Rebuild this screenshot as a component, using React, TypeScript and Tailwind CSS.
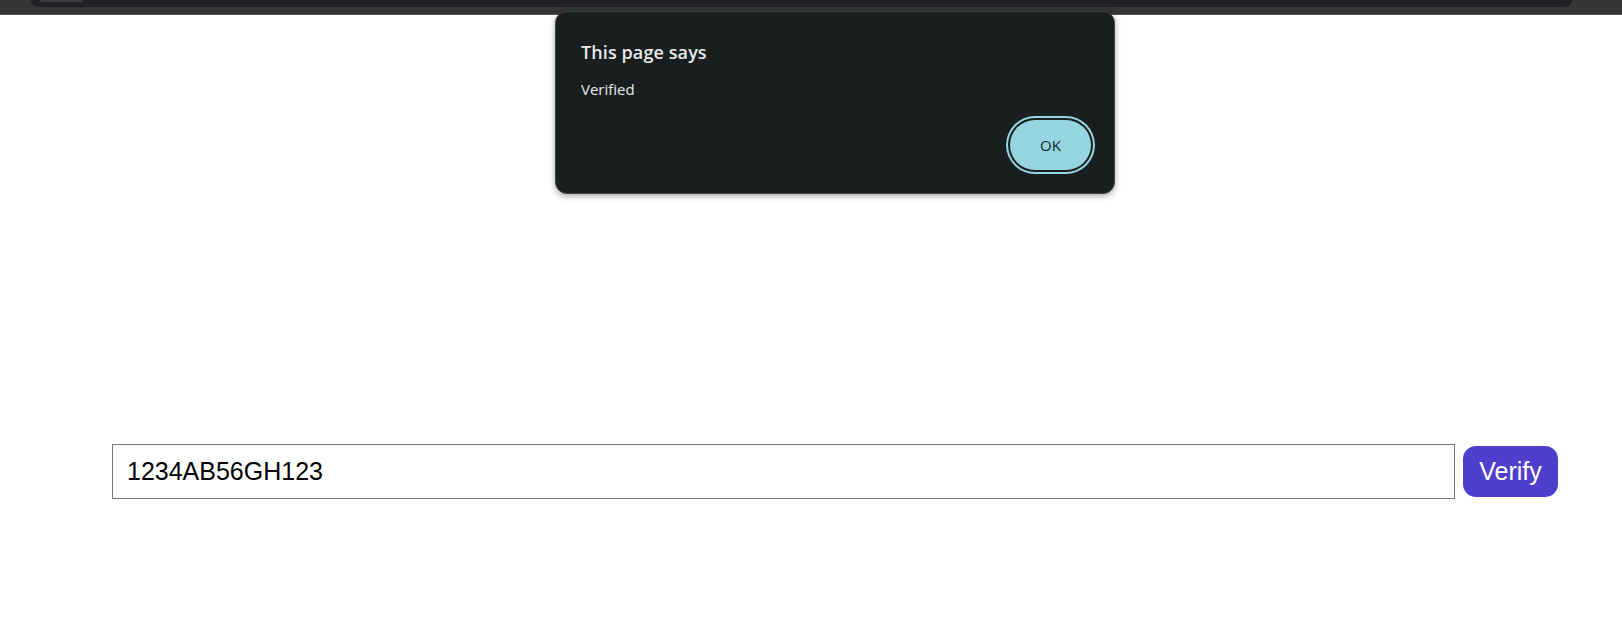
import { useState } from "react";

export default function App() {
  const [code, setCode] = useState("1234AB56GH123");

  return (
    <div className="relative h-[622px] w-[1622px] overflow-hidden bg-white">
      {/* browser strip at the top */}
      <div className="h-[15px] border-b border-[#555] bg-[#353535] px-[31px]">
        <div className="relative h-[7px] w-[1541px] rounded-b-[8px] bg-[#202124]">
          <div className="absolute left-[9px] top-0 h-[2px] w-[43px] rounded-b bg-[#3a3b3d]" />
        </div>
      </div>

      <div className="pt-[429px] pl-[112px]">
        <div className="flex items-center gap-[8px]">
          <input
            value={code}
            onChange={(e) => setCode(e.target.value)}
            className="h-[55px] w-[1343px] border border-[#767676] px-[14px] font-['Liberation_Sans',Arial,sans-serif] text-[25px] text-black outline-none"
          />
          <button className="h-[51px] w-[95px] rounded-[13px] bg-[#4f3fce] font-['Liberation_Sans',Arial,sans-serif] text-[25px] text-white">
            Verify
          </button>
        </div>
      </div>

      {/* alert dialog */}
      <div className="absolute left-[555px] top-[11px] h-[183px] w-[560px] rounded-[12px] border border-[#3f4444] bg-[#1a1e1e] px-[25px] pt-[28px] font-['Open_Sans','Noto_Sans',sans-serif] text-[#e6eaea] shadow-[0_2px_6px_rgba(0,0,0,0.35)]">
        <div className="text-[18px] font-semibold leading-[24px] tracking-[0.1px]">This page says</div>
        <div className="mt-[15px] text-[15px] leading-[20px]">Verified</div>
        <div className="-mr-[2px] mt-[21px] flex justify-end">
          <button className="h-[50px] w-[81px] rounded-full bg-[#94d5e1] text-[15px] text-[#16262c] ring-2 ring-[#94d5e1] ring-offset-2 ring-offset-[#1a1e1e]">
            OK
          </button>
        </div>
      </div>
    </div>
  );
}
